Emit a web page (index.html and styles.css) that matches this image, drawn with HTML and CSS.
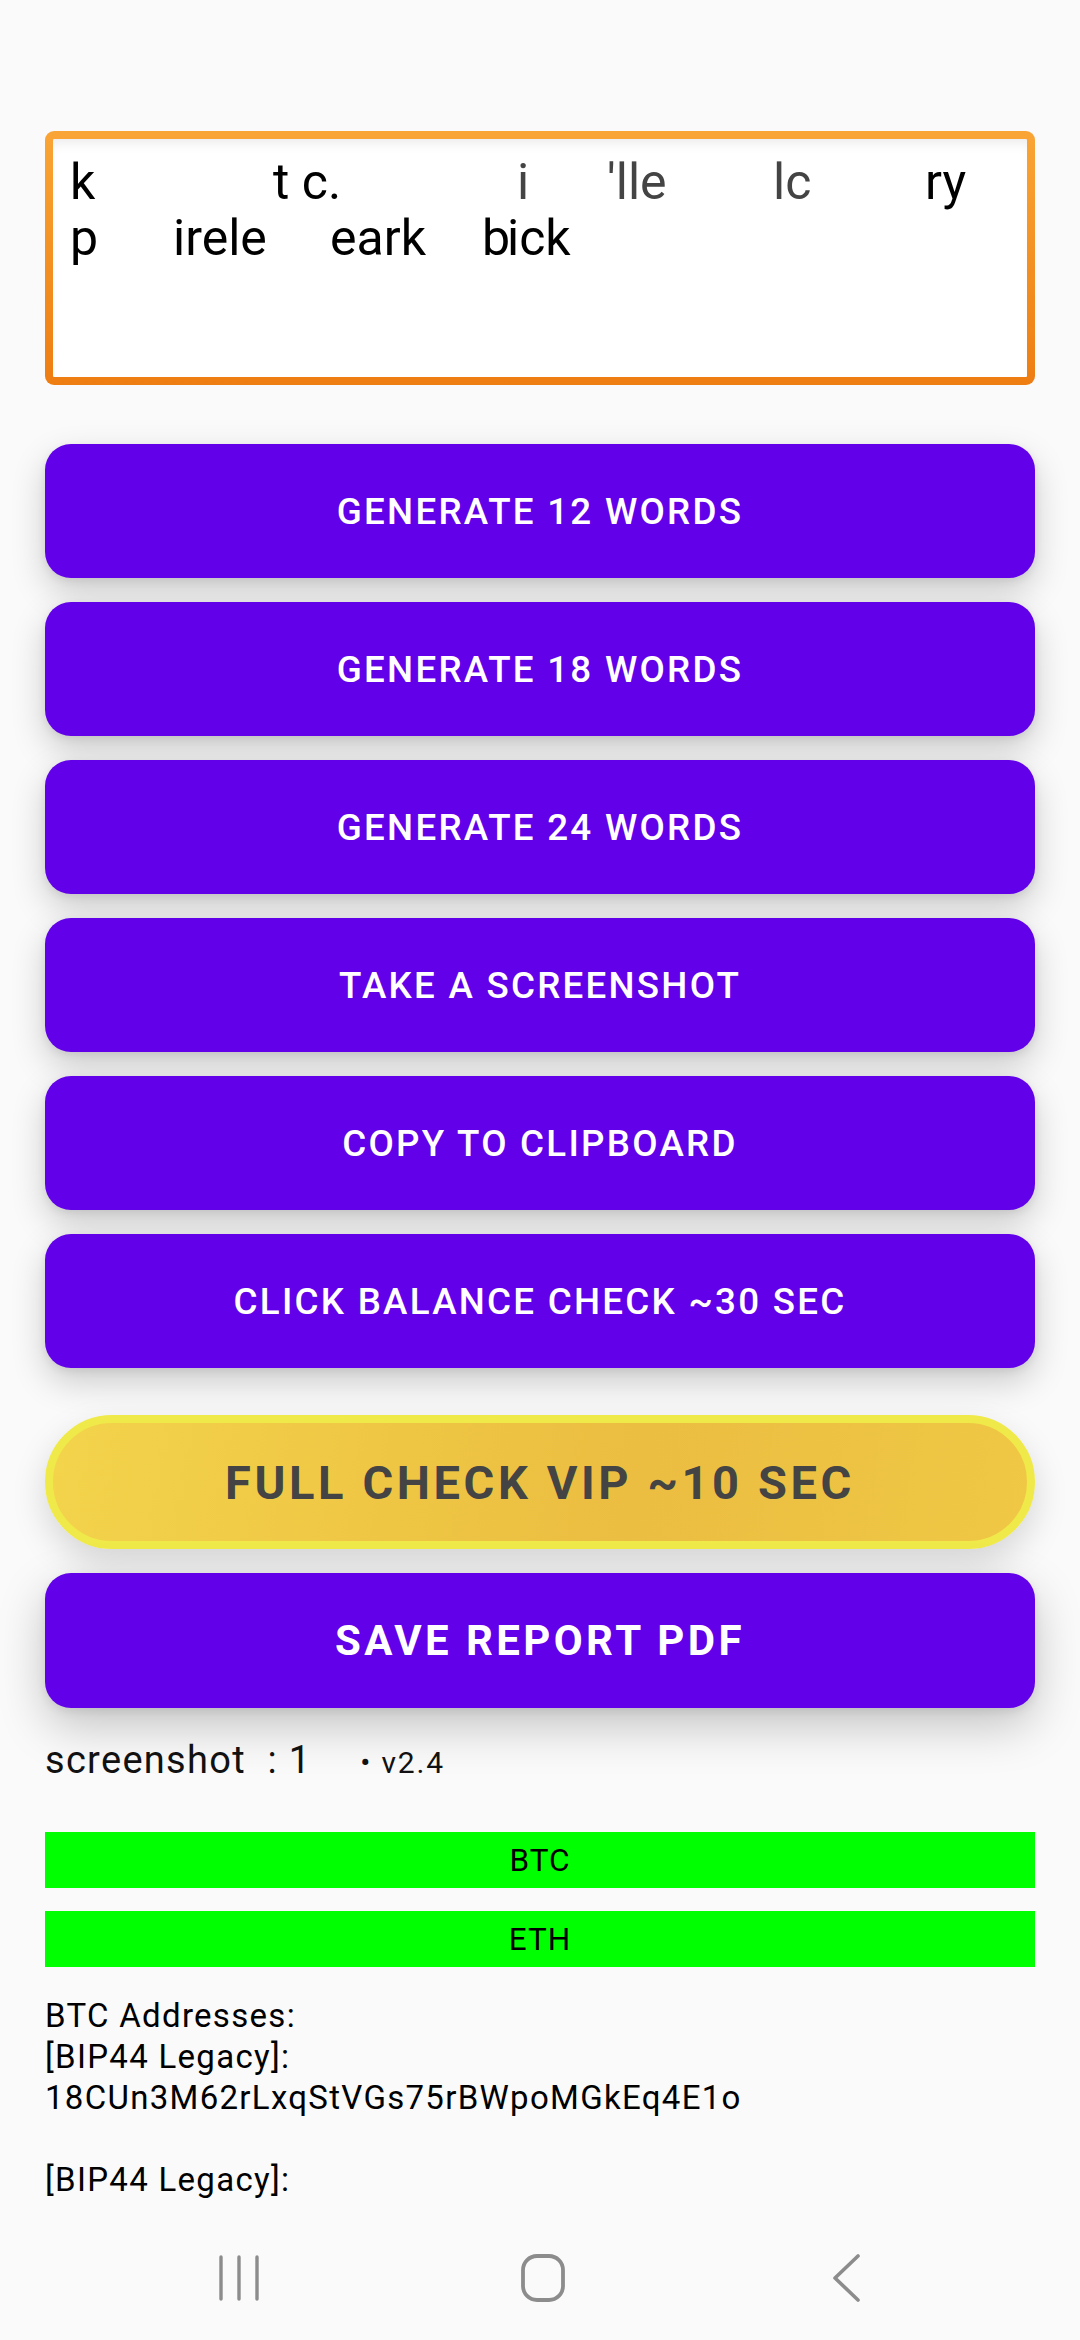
FILE: index.html
```html
<!DOCTYPE html>
<html lang="en">
<head>
<meta charset="utf-8">
<title>Seed generator</title>
<link rel="stylesheet" href="styles.css">
</head>
<body>
<div class="screen">
  <main class="content">
    <div class="seed">
      <div class="seed-line">
        <span class="frag w203">k</span><span class="frag w244">t c.</span><span class="frag w90 faint">i</span><span class="frag w166 faint">'lle</span><span class="frag w152 faint">lc</span><span class="frag">ry</span>
      </div>
      <div class="seed-line">
        <span class="frag w103">p</span><span class="frag w157">irele</span><span class="frag w152">eark</span><span class="frag w25">b</span><span class="frag">ick</span>
      </div>
    </div>

    <div class="actions">
      <button class="btn">Generate 12 words</button>
      <button class="btn">Generate 18 words</button>
      <button class="btn">Generate 24 words</button>
      <button class="btn">Take a screenshot</button>
      <button class="btn">Copy to clipboard</button>
      <button class="btn">Click balance check ~30 sec</button>
    </div>

    <button class="btn-vip">Full check VIP ~10 sec</button>
    <button class="btn btn-save">Save report PDF</button>

    <div class="status">
      <span class="status-count">screenshot&nbsp; : 1</span>
      <span class="status-version">• v2.4</span>
    </div>

    <div class="coins">
      <div class="coin">BTC</div>
      <div class="coin">ETH</div>
    </div>

    <div class="addresses">
      <div>BTC Addresses:</div>
      <div>[BIP44 Legacy]:</div>
      <div>18CUn3M62rLxqStVGs75rBWpoMGkEq4E1o</div>
      <div class="blank">&nbsp;</div>
      <div>[BIP44 Legacy]:</div>
    </div>
  </main>

  <nav class="navbar">
    <span class="nav-item">
      <svg width="44" height="48" viewBox="0 0 44 48" aria-hidden="true">
        <path d="M3 3v42M21 3v42M39 3v42" stroke="#8c8c8c" stroke-width="3.4" stroke-linecap="round" fill="none"/>
      </svg>
    </span>
    <span class="nav-item">
      <svg width="48" height="50" viewBox="0 0 48 50" aria-hidden="true">
        <rect x="4" y="3" width="40" height="44" rx="14" ry="14" stroke="#8c8c8c" stroke-width="3.8" fill="none"/>
      </svg>
    </span>
    <span class="nav-item">
      <svg width="32" height="50" viewBox="0 0 32 50" aria-hidden="true">
        <path d="M28 3 L5 25 L28 47" stroke="#8c8c8c" stroke-width="3.6" stroke-linecap="round" stroke-linejoin="round" fill="none"/>
      </svg>
    </span>
  </nav>
</div>
</body>
</html>
```

FILE: styles.css
```css
* {
  box-sizing: border-box;
}

html, body {
  margin: 0;
  padding: 0;
}

body {
  width: 1080px;
  height: 2340px;
  background: #fafafa;
  font-family: Roboto, "Noto Sans", "Liberation Sans", sans-serif;
  color: #111;
  overflow: hidden;
}

.screen {
  height: 2340px;
  display: flex;
  flex-direction: column;
}

.content {
  flex: 1;
  overflow: hidden;
  padding: 131px 45px 0 45px;
  display: flex;
  flex-direction: column;
}

/* seed phrase box */
.seed {
  height: 254px;
  border: 8px solid transparent;
  border-radius: 9px;
  background:
    linear-gradient(#fff, #fff) padding-box,
    linear-gradient(#f9a535, #ee7d12) border-box;
  box-shadow: inset 0 10px 14px -8px rgba(0, 0, 0, 0.10);
  padding: 15px 17px 0 17px;
  font-size: 50px;
  line-height: 56px;
  color: #000;
}

.seed-line {
  white-space: nowrap;
  height: 56px;
}

.frag {
  display: inline-block;
}

.faint {
  color: #444;
}

.w25 { width: 25px; }
.w90 { width: 90px; }
.w103 { width: 103px; }
.w152 { width: 152px; }
.w157 { width: 157px; }
.w166 { width: 166px; }
.w203 { width: 203px; }
.w244 { width: 244px; }

/* purple buttons */
.actions {
  margin-top: 59px;
  display: flex;
  flex-direction: column;
  gap: 24px;
}

.btn {
  display: flex;
  align-items: center;
  justify-content: center;
  height: 134px;
  width: 100%;
  border: none;
  border-radius: 26px;
  background: #6200ea;
  color: #fff;
  font-family: Roboto, "Noto Sans", sans-serif;
  font-weight: 500;
  font-size: 36.75px;
  letter-spacing: 2.25px;
  text-transform: uppercase;
  box-shadow: 0 14px 34px rgba(0, 0, 0, 0.19), 0 3px 8px rgba(0, 0, 0, 0.08);
  padding: 0;
}

.btn-vip {
  margin-top: 47px;
  height: 134px;
  width: 100%;
  border: 8px solid #efe949;
  border-radius: 67px;
  background: linear-gradient(100deg, #f3d44b 0%, #efc644 35%, #ebbd41 60%, #f0c845 100%);
  color: #444;
  font-family: Roboto, "Noto Sans", sans-serif;
  font-weight: 700;
  font-size: 47px;
  letter-spacing: 3.6px;
  text-transform: uppercase;
  box-shadow: 0 14px 34px rgba(0, 0, 0, 0.15);
  padding: 0;
}

.btn-save {
  margin-top: 24px;
  height: 135px;
  font-weight: 700;
  font-size: 42px;
  letter-spacing: 3.4px;
  box-shadow: 0 18px 48px rgba(0, 0, 0, 0.22), 0 4px 10px rgba(0, 0, 0, 0.08);
}

/* status line */
.status {
  margin-top: 31px;
  display: flex;
  align-items: baseline;
  gap: 49px;
  line-height: 43px;
}

.status-count {
  font-size: 38px;
  letter-spacing: 1.3px;
  color: #111;
}

.status-version {
  font-size: 30px;
  letter-spacing: 1.8px;
  color: #111;
}

/* coin bars */
.coins {
  margin-top: 48px;
  display: flex;
  flex-direction: column;
  gap: 23px;
}

.coin {
  height: 56px;
  background: #00ff00;
  display: flex;
  align-items: center;
  justify-content: center;
  font-size: 31.5px;
  letter-spacing: 1px;
  color: #000;
}

/* addresses */
.addresses {
  margin-top: 28px;
  font-size: 33px;
  letter-spacing: 1.3px;
  line-height: 41px;
  color: #000;
}

/* system navigation */
.navbar {
  height: 124px;
  flex: none;
  background: #fafafa;
  display: flex;
  align-items: center;
  justify-content: center;
  gap: 223px;
  padding-left: 6px;
}

.nav-item {
  width: 80px;
  display: flex;
  justify-content: center;
  align-items: center;
}
```
